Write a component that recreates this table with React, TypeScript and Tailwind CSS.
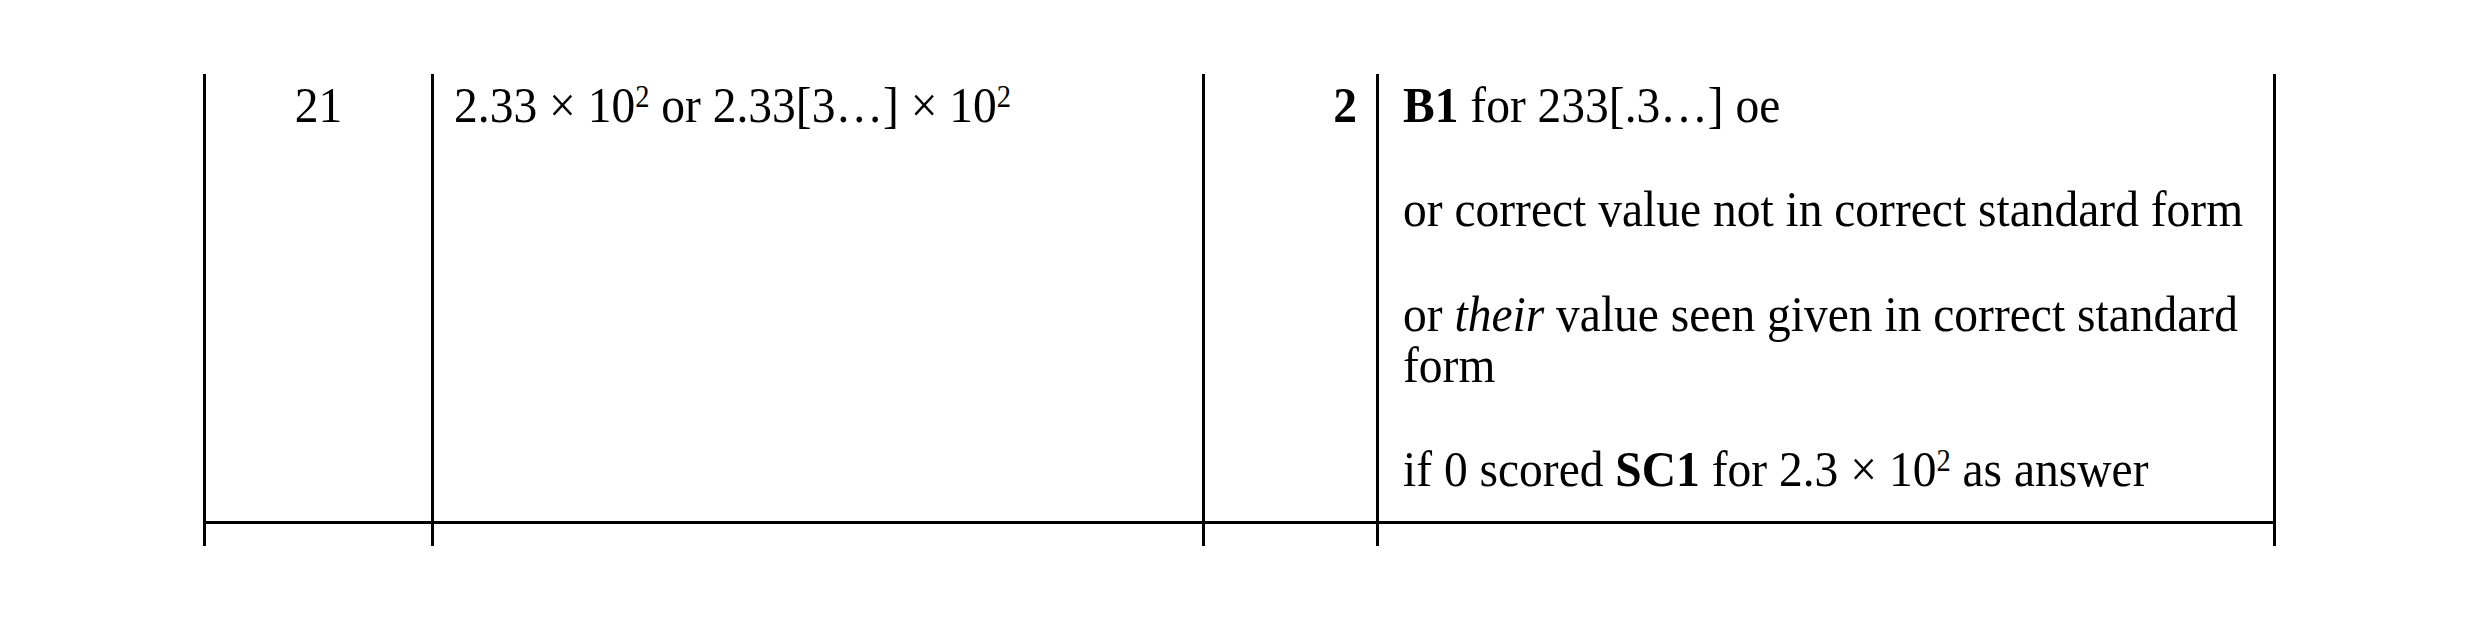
import React from 'react';

const Sq = () => <sup className="text-[0.6em]">2</sup>;

// reference text is a touch taller than wide, so each cell's text is stretched a little
const Txt = ({ className = '', children }: { className?: string; children: React.ReactNode }) => (
  <div className={`origin-top scale-y-[1.08] ${className}`}>{children}</div>
);

export default function App() {
  return (
    <div className="w-[2480px] h-[621px] bg-white pt-[74px] pl-[203px] text-black text-[47.5px] leading-[48.15px] font-['Liberation_Serif','Times_New_Roman',serif]">
      {/* Mark scheme row */}
      <div className="grid grid-cols-[228px_771px_174px_900px] w-[2073px] h-[450px] border-b-[3px] border-black">
        <div className="border-l-[3px] border-black pt-[5px] text-center">
          <Txt>21</Txt>
        </div>
        <div className="border-l-[3px] border-black pt-[5px] pl-[20px]">
          <Txt>2.33 × 10<Sq /> or 2.33[3…] × 10<Sq /></Txt>
        </div>
        <div className="border-l-[3px] border-black pt-[5px] pr-[19px] text-right font-bold">
          <Txt>2</Txt>
        </div>
        <div className="border-l-[3px] border-r-[3px] border-black pt-[5px] pl-[24px] pr-[16px]">
          <Txt className="flex flex-col gap-[48.15px]">
            <p><span className="font-bold">B1</span> for 233[.3…] oe</p>
            <p>or correct value not in correct standard form</p>
            <p>or <i>their</i> value seen given in correct standard form</p>
            <p>if 0 scored <span className="font-bold">SC1</span> for 2.3 × 10<Sq /> as answer</p>
          </Txt>
        </div>
      </div>

      {/* Start of next row */}
      <div className="grid grid-cols-[228px_771px_174px_900px] w-[2073px] h-[22px]">
        <div className="border-l-[3px] border-black" />
        <div className="border-l-[3px] border-black" />
        <div className="border-l-[3px] border-black" />
        <div className="border-l-[3px] border-r-[3px] border-black" />
      </div>
    </div>
  );
}
